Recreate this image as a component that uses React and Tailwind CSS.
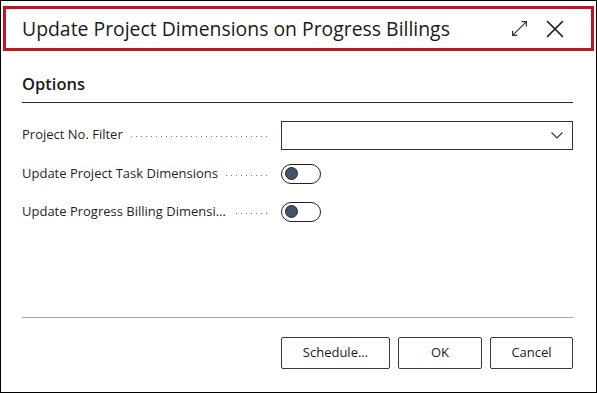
import React, { useState } from 'react';

// Dotted leader between a field caption and its control
function Leader() {
  return (
    <div className="flex-1 h-px mt-[3px] bg-[linear-gradient(to_right,#7a7a7a_1px,transparent_1px)] bg-[length:5px_1px] bg-repeat-x" />
  );
}

function Toggle({ on, onChange }) {
  return (
    <button
      onClick={() => onChange(!on)}
      className="w-[40px] h-[20px] rounded-full border border-[#1f1f1f] flex items-center px-[3px] bg-white"
    >
      <span className="w-[13px] h-[13px] rounded-full bg-[#44536a] border border-[#1f2937]" />
    </button>
  );
}

function FieldRow({ label, children, className = '' }) {
  return (
    <div className={`flex items-center ${className}`}>
      <div className="w-[259px] flex items-center pr-[11px]">
        <span className="max-w-[214px] truncate text-[13px] text-[#1f1f1f] pr-[8px]">{label}</span>
        <Leader />
      </div>
      {children}
    </div>
  );
}

export default function App() {
  const [taskDims, setTaskDims] = useState(false);
  const [billingDims, setBillingDims] = useState(false);

  return (
    <div className="w-[597px] h-[393px] bg-white border border-black flex flex-col font-['Open_Sans',sans-serif] text-[#212121]">
      {/* Header, highlighted */}
      <div className="mt-[5px] mx-[2px] h-[45px] border-[3px] border-[#c0161c] flex items-center pl-[16px] pr-[27px]">
        <h1 className="flex-1 text-[19.4px] text-[#1a1a1a] leading-none">Update Project Dimensions on Progress Billings</h1>
        <svg width="17" height="17" viewBox="0 0 16 16" fill="none" stroke="#333" strokeWidth="1.1" className="mr-[18px]">
          <path d="M10 1.5h4.5V6M14.5 1.5 1.5 14.5M1.5 10v4.5H6" />
        </svg>
        <svg width="18" height="18" viewBox="0 0 16 16" fill="none" stroke="#222" strokeWidth="1.3">
          <path d="M1 1l14 14M15 1 1 15" />
        </svg>
      </div>

      <div className="pl-[21px] pr-[23px] flex flex-col flex-1">
        <div className="mt-[25px] pb-[9px] border-b border-[#2b2b2b]">
          <h2 className="text-[16.5px] font-semibold leading-none text-[#1a1a1a]">Options</h2>
        </div>

        <FieldRow label="Project No. Filter" className="mt-[18px]">
          <div className="w-[292px] h-[29px] border border-[#2a3340] flex items-center justify-end pr-[9px]">
            <svg width="12" height="7" viewBox="0 0 12 7" fill="none" stroke="#333" strokeWidth="1.1">
              <path d="M0.5 0.5 6 6l5.5-5.5" />
            </svg>
          </div>
        </FieldRow>

        <FieldRow label="Update Project Task Dimensions" className="mt-[14px]">
          <Toggle on={taskDims} onChange={setTaskDims} />
        </FieldRow>

        <FieldRow label="Update Progress Billing Dimensions" className="mt-[18px]">
          <Toggle on={billingDims} onChange={setBillingDims} />
        </FieldRow>

        <div className="flex-1" />

        <div className="border-t border-[#a6a6a6]" />
        <div className="flex justify-end gap-[8px] mt-[19px] mb-[23px]">
          <button className="w-[109px] h-[32px] border border-[#3a3a3a] rounded-[2px] text-[13px] text-[#1a1a1a]">Schedule...</button>
          <button className="w-[84px] h-[32px] border border-[#3a3a3a] rounded-[2px] text-[13px] text-[#1a1a1a]">OK</button>
          <button className="w-[83px] h-[32px] border border-[#3a3a3a] rounded-[2px] text-[13px] text-[#1a1a1a]">Cancel</button>
        </div>
      </div>
    </div>
  );
}
